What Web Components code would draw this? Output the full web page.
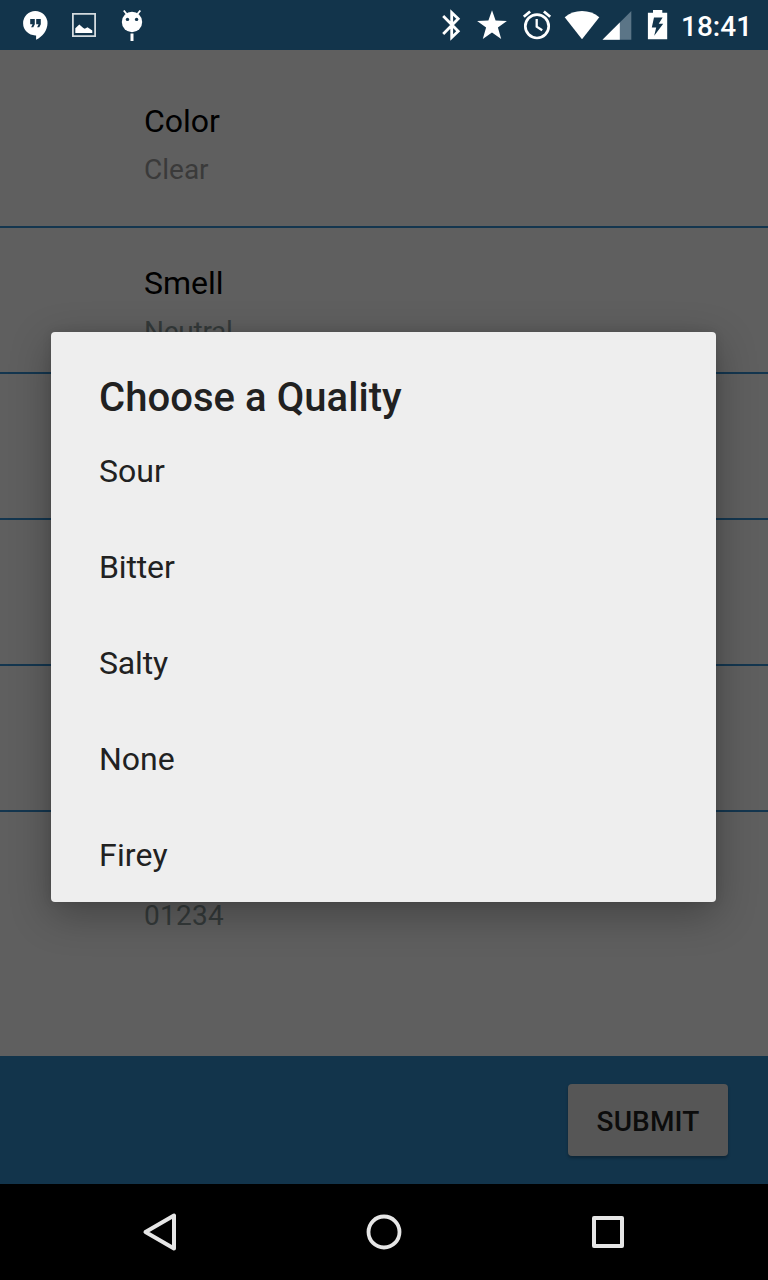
<!DOCTYPE html>
<html lang="en">
<head>
<meta charset="utf-8">
<title>Choose a Quality</title>
<style>
html, body { margin: 0; height: 100%; background: #000; overflow: hidden; }
body { font-family: Roboto, "Noto Sans", sans-serif; }
</style>
</head>
<body>
<phone-screen></phone-screen>
<script>
function define(name, html) {
  const template = document.createElement('template');
  template.innerHTML = html;
  customElements.define(name, class extends HTMLElement {
    constructor() {
      super();
      this.attachShadow({ mode: 'open' }).append(template.content.cloneNode(true));
    }
  });
}

define('status-bar', `
<style>
:host { display: flex; height: 50px; background: #12344b; color: #fff; box-sizing: border-box; padding: 0 18px 0 20px; }
svg { display: block; flex: none; height: 50px; }
.left, .right { display: flex; }
.right { margin-left: auto; }
.left { gap: 19px; }
.time { font-size: 28px; font-weight: 500; line-height: 54px; width: 69px; margin-left: 11px; white-space: nowrap; }
</style>
<div class="left">
  <svg width="30" viewBox="20 0 30 50"><path fill="#fff" fill-rule="evenodd" d="M35.3 11a12.2 12.2 0 0 1 12.2 12.2c0 7-4.800 13.200-11.400 16.600V35.400h-.8A12.200 12.200 0 1 1 35.300 11zM30.200 19v5.300h2.400l-1.500 2.900h2.200l1.500-2.900V19zM36.200 19v5.300h2.400l-1.500 2.900h2.200l1.500-2.900V19z"/></svg>
  <svg width="30" viewBox="69 0 30 50"><path fill="none" stroke="#d3dade" stroke-width="1.800" d="M72.900 13.900h22.200v22.200H72.900z"/><path fill="#fff" d="M75.300 33v-4.700l4-3.800 4 3.500 1.500.8 2.700-1.600 4.800 3.300V33z"/></svg>
  <svg width="30" viewBox="118 0 30 50"><path fill="none" stroke="#fff" stroke-width="1.900" d="M123.800 10.500l3.200 4M140.300 10.500l-3.200 4"/><circle cx="132" cy="22" r="10.200" fill="#fff"/><circle cx="127.500" cy="19.400" r="1.700" fill="#12344b"/><circle cx="136.600" cy="19.400" r="1.700" fill="#12344b"/><path fill="#fff" d="M130.500 33.500h3V41h-3z"/></svg>
</div>
<div class="right">
  <svg width="33" viewBox="437 0 33 50"><path fill="none" stroke="#fff" stroke-width="2.800" d="M443.200 16l15 15.300-6.500 6.100V12.600l6.500 6.100-15 15.300"/></svg>
  <svg width="46" viewBox="470 0 46 50"><path fill="#fff" d="M492 10.300l3.600 10.300 11.300.3-9 6.700 3.300 11.500-9.200-6.600-9.200 6.600 3.300-11.500-9-6.700 11.300-.3z"/></svg>
  <svg width="44" viewBox="516 0 44 50"><g fill="none" stroke="#fff"><circle cx="537" cy="26.300" r="11.700" stroke-width="2.700"/><path stroke-width="2.300" d="M536.700 19v7.700l5.500 3.600"/><path stroke-width="2.800" d="M523.800 16.800l6.300-5.300M550.200 16.800l-6.300-5.300"/></g></svg>
  <svg width="41" viewBox="560 0 41 50"><path fill="#fff" d="M582 39.300L564.700 17.200Q572 11 582 11t17.300 6.200z"/></svg>
  <svg width="39" viewBox="601 0 39 50"><path fill="#5b7587" d="M631.300 11v28.800H602.500z"/><path fill="#fff" d="M619.800 22.500v17.300H602.500z"/></svg>
  <svg width="30" viewBox="640 0 30 50"><path fill="#fff" fill-rule="evenodd" d="M653 10h9.300v2.800h4.900v26.400h-19.300V12.800h5.100zM654 17.500l-2.200 10h4.400l-2 8.200 9-11.900h-4.500l3.900-6.300z"/></svg>
  <div class="time">18:41</div>
</div>`);

define('quality-row', `
<style>
:host { display: block; box-sizing: border-box; height: 146px; padding: 36px 0 0 144px; border-bottom: 2px solid #14364f; }
:host([first]) { height: 178px; padding-top: 52px; }
:host([last]) { border: 0; }
.label { height: 38px; font-size: 32px; line-height: 38px; color: #000; }
.value { margin-top: 13px; font-size: 28px; line-height: 33px; color: var(--value-color, #343a3a); letter-spacing: var(--value-spacing, 0); }
</style>
<div class="label"><slot name="label"></slot></div>
<div class="value"><slot></slot></div>`);

define('submit-button', `
<style>
:host { display: flex; align-items: center; justify-content: center; width: 160px; height: 72px; border-radius: 4px; background: #565656; color: #0c0c0c; font-size: 28px; font-weight: 500; letter-spacing: .15px; box-sizing: border-box; padding-top: 3px; box-shadow: 0 2px 3px rgba(0,0,0,.28); }
</style><slot></slot>`);

define('action-bar', `
<style>
:host { display: flex; align-items: center; justify-content: flex-end; height: 128px; box-sizing: border-box; padding-right: 40px; background: #12344b; }
</style><slot></slot>`);

define('navigation-bar', `
<style>
:host { display: flex; justify-content: center; gap: 176px; align-items: center; height: 96px; background: #000; }
svg { display: block; width: 48px; height: 48px; fill: none; stroke: #e6e6e6; stroke-width: 4; stroke-linejoin: round; }
</style>
<svg viewBox="136 1208 48 48"><path d="M174 1215.500v33L145.500 1232z"/></svg>
<svg viewBox="360 1208 48 48"><circle cx="384" cy="1232" r="15.500" stroke-width="3.800"/></svg>
<svg viewBox="584 1208 48 48"><path d="M594 1218h28v28h-28z"/></svg>`);

define('choice-item', `
<style>
:host { display: flex; align-items: center; height: 96px; font-size: 32px; color: #212121; }
</style><slot></slot>`);

define('choice-dialog', `
<style>
:host { display: block; box-sizing: border-box; width: 665px; height: 570px; padding: 42px 48px 0; background: #eee; border-radius: 4px; overflow: hidden; box-shadow: 0 12px 40px rgba(0,0,0,.3), 0 0 10px rgba(0,0,0,.1); }
.title { height: 49px; font-size: 40px; line-height: 47px; font-weight: 500; letter-spacing: .05px; color: #212121; }
</style>
<div class="title"><slot name="title"></slot></div>
<slot></slot>`);

define('phone-screen', `
<style>
:host { display: flex; flex-direction: column; position: relative; width: 768px; height: 1280px; overflow: hidden; background: #5f5f5f; }
main { flex: 1; min-height: 0; }
choice-dialog { position: absolute; left: 51px; top: 332px; }
.first { --value-color: #3a3a3a; }
.smell { --value-spacing: -.25px; }
.code { --value-spacing: .25px; }
.tight { letter-spacing: -.15px; }
.loose { letter-spacing: .2px; }
</style>
<status-bar></status-bar>
<main>
  <quality-row first class="first"><span slot="label">Color</span>Clear</quality-row>
  <quality-row class="smell"><span slot="label">Smell</span>Neutral</quality-row>
  <quality-row></quality-row>
  <quality-row></quality-row>
  <quality-row></quality-row>
  <quality-row last class="code">01234</quality-row>
</main>
<action-bar><submit-button>SUBMIT</submit-button></action-bar>
<navigation-bar></navigation-bar>
<choice-dialog>
  <span slot="title">Choose a Quality</span>
  <choice-item>Sour</choice-item>
  <choice-item class="tight">Bitter</choice-item>
  <choice-item class="tight">Salty</choice-item>
  <choice-item>None</choice-item>
  <choice-item class="loose">Firey</choice-item>
</choice-dialog>`);
</script>
</body>
</html>
